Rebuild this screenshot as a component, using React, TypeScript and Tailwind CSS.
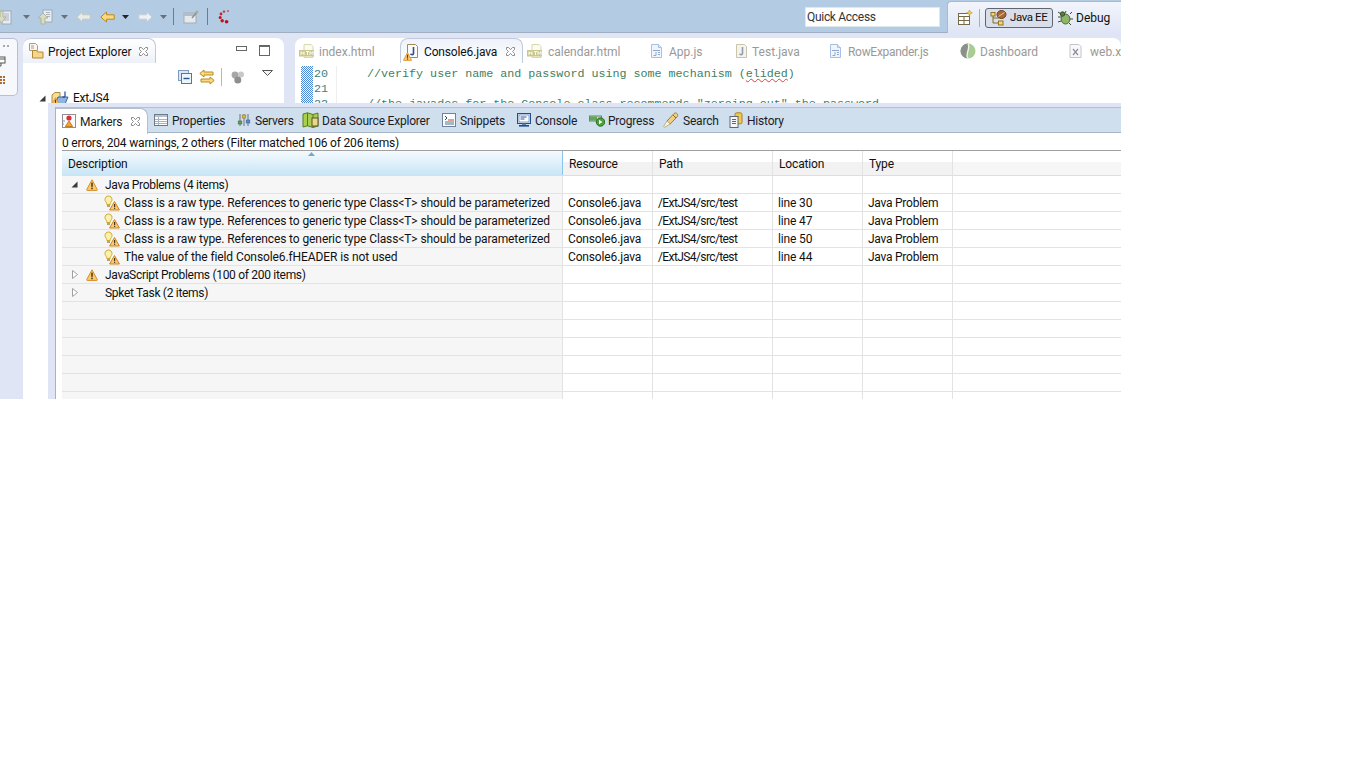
import React from 'react';

const font = "font-['Roboto',sans-serif]";

const Warn = ({ className = '' }: { className?: string }) => (
  <svg viewBox="0 0 12 12" className={className}>
    <path d="M6 .8 11.3 10.6c.2.4 0 .8-.5.8H1.2c-.5 0-.7-.4-.5-.8Z" fill="#f9cb70" stroke="#d88d2a" />
    <rect x="5.2" y="3.6" width="1.6" height="4.2" fill="#5a3c10" />
    <rect x="5.2" y="8.6" width="1.6" height="1.6" fill="#5a3c10" />
  </svg>
);

const BulbWarn = () => (
  <svg viewBox="0 0 16 16" className="w-4 h-4 shrink-0">
    <path d="M4.5 1C2.4 1 1 2.6 1 4.5 1 6 1.9 6.7 2.5 7.8c.3.6.3 1.1.3 1.7h3.4c0-.8 0-1.3.5-2C7.3 6.6 8 6 8 4.5 8 2.6 6.6 1 4.5 1Z" fill="#fdf0a8" stroke="#cfa83a" />
    <rect x="3" y="10" width="3" height="2" fill="#b9a46a" />
    <path d="M10.5 6.5 15.4 15H5.6Z" fill="#f9cb70" stroke="#c98420" />
    <rect x="10" y="9" width="1.2" height="3" fill="#4a3310" />
    <rect x="10" y="12.7" width="1.2" height="1.2" fill="#4a3310" />
  </svg>
);

const CloseX = () => (
  <svg viewBox="0 0 11 11" className="w-[11px] h-[11px] shrink-0">
    <path d="M1.5 1.5h2L5.5 3.7 7.5 1.5h2v2L7.5 5.5l2 2v2h-2L5.5 7.4 3.5 9.5h-2v-2l2-2-2-2Z" fill="#fff" stroke="#8c8c8c" />
  </svg>
);

const Dropdown = ({ dark = false }: { dark?: boolean }) => (
  <svg viewBox="0 0 7 4" className="w-[7px] h-[4px] shrink-0">
    <path d="M0 0h7L3.5 4Z" fill={dark ? '#20242c' : '#67707c'} />
  </svg>
);

const HtmlIcon = () => (
  <svg viewBox="0 0 16 16" className="w-4 h-4 shrink-0">
    <path d="M5 1.5h7l2 2v11H5Z" fill="#fbfbf2" stroke="#d8d8b0" />
    <rect x="0" y="7" width="15" height="6.5" fill="#c9c78e" />
    <path d="M2 8.5v3.5M5 8.5v3.5M2 10h3M7 8.5h3M8.5 8.5v3.5M11 12V8.5l1.5 2 1.5-2V12" stroke="#fff" fill="none" strokeWidth=".9" />
  </svg>
);

const JavaFile = ({ warn = false, dim = false }: { warn?: boolean; dim?: boolean }) => (
  <span className="relative w-4 h-4 shrink-0 block">
    <svg viewBox="0 0 16 16" className="w-4 h-4">
      <path d="M3.5 1.5h8l2 2v11h-10Z" fill={dim ? '#f6f4ea' : '#fdfcf4'} stroke={dim ? '#c9c4ac' : '#a08a55'} />
      <path d="M9.5 4v6.5c0 1.5-2.5 1.5-3 .2" fill="none" stroke={dim ? '#8d9cb8' : '#2a4f9c'} strokeWidth="1.6" />
    </svg>
    {warn && <Warn className="absolute -left-[1px] bottom-[-2px] w-[9px] h-[9px]" />}
  </span>
);

const JsFile = () => (
  <svg viewBox="0 0 16 16" className="w-4 h-4 shrink-0 ml-[-2px]">
    <path d="M2.5 1.5h7l3 3v10h-10Z" fill="#f0f5fc" stroke="#a9bfe6" />
    <path d="M9.5 1.5v3h3" fill="#dbe6f7" stroke="#a9bfe6" />
    <path d="M4 7.5h7M9 9.5h2M9 11.5h2M7 9v3.5H4.5" stroke="#8ea8d6" fill="none" />
  </svg>
);

const SpringIcon = () => (
  <svg viewBox="0 0 16 16" className="w-4 h-4 shrink-0">
    <circle cx="8" cy="8" r="7.5" fill="#a9cc92" />
    <path d="M8 .5A7.5 7.5 0 0 0 8 15.5C4.5 11 11 6 8 .5Z" fill="#8b9089" />
    <path d="M8 .5C11 6 4.5 11 8 15.5" stroke="#eef3ea" fill="none" strokeWidth="1.4" />
  </svg>
);

const XmlIcon = () => (
  <svg viewBox="0 0 16 16" className="w-4 h-4 shrink-0 ml-[-2px]">
    <path d="M2 1.5h9l2 2v11H2Z" fill="#f8f8fb" stroke="#c4c4cc" />
    <path d="M5 6l5 6M10 6l-5 6" stroke="#8a8f9c" strokeWidth="1.2" />
  </svg>
);

const BackArrow = ({ color, stroke }: { color: string; stroke: string }) => (
  <svg viewBox="0 0 15 12" className="w-[15px] h-3 shrink-0">
    <path d="M.8 6 6.5 1v2.8h7.7v4.4H6.5V11Z" fill={color} stroke={stroke} />
  </svg>
);

const FwdArrow = () => (
  <svg viewBox="0 0 15 12" className="w-[15px] h-3 shrink-0">
    <path d="M14.2 6 8.5 1v2.8H.8v4.4h7.7V11Z" fill="#eef1f4" stroke="#c3ccd6" />
  </svg>
);

const SaveDown = () => (
  <svg viewBox="0 0 16 18" className="w-4 h-[18px] shrink-0">
    <rect x="5" y="3" width="9" height="13" fill="#e8edf2" stroke="#9eabb8" />
    <path d="M7 6h5M7 8h5M7 10h5M7 12h5" stroke="#aab4c0" />
    <path d="M0 9h3V3h3v6h3l-4.500 6Z" fill="#d8dcc4" stroke="#b0b698" />
  </svg>
);

const SaveUp = () => (
  <svg viewBox="0 0 16 18" className="w-4 h-[18px] shrink-0">
    <rect x="5" y="2" width="9" height="12" fill="#e8edf2" stroke="#9eabb8" />
    <path d="M8 4.500h4M8 6.500h4M8 8.500h4" stroke="#aab4c0" />
    <path d="M0 10 5 5l5 5H7v6H3v-6Z" fill="#d8dcc4" stroke="#b0b698" />
  </svg>
);

const ToolOpen = () => (
  <svg viewBox="0 0 16 16" className="w-4 h-4 shrink-0">
    <rect x="1" y="4" width="12" height="10" fill="#e6e8ec" stroke="#a4adb8" />
    <rect x="1" y="4" width="12" height="3" fill="#b4bcc6" />
    <path d="M9 9l5-6" stroke="#8b9198" strokeWidth="1.4" />
    <circle cx="14" cy="3" r="1.4" fill="#a7b08e" />
  </svg>
);

const Spinner = () => (
  <svg viewBox="0 0 14 16" className="w-[14px] h-4 shrink-0">
    <circle cx="10" cy="2" r="1" fill="#c9535a" />
    <circle cx="6" cy="2.600" r="1.2" fill="#c9303a" />
    <circle cx="3" cy="5" r="1.4" fill="#c8202c" />
    <circle cx="2.200" cy="8.600" r="1.5" fill="#c8101c" />
    <circle cx="4.200" cy="11.800" r="1.7" fill="#c4101c" />
    <circle cx="8.600" cy="12.800" r="1.8" fill="#c00c18" />
  </svg>
);

const ExplorerIcon = () => (
  <svg viewBox="0 0 16 16" className="w-4 h-4 shrink-0">
    <path d="M1.500 .5h6l2 2v5h-8Z" fill="#f8f6ee" stroke="#a69f88" />
    <path d="M3 3h3M3 5h3" stroke="#b49a7a" />
    <path d="M4.500 9V7.500h4l1 1.500h5.500v6H4.500Z" fill="#f5d78a" stroke="#b08a38" />
  </svg>
);

const CollapseIcon = () => (
  <svg viewBox="0 0 14 14" className="w-[14px] h-[14px] shrink-0">
    <rect x=".5" y=".5" width="10" height="10" fill="#dbe7f4" stroke="#7e9cc0" />
    <rect x="3.500" y="3.500" width="10" height="10" fill="#eef4fb" stroke="#4e78a8" />
    <path d="M5.500 8.500h6" stroke="#27548c" strokeWidth="1.4" />
  </svg>
);

const LinkIcon = () => (
  <svg viewBox="0 0 16 16" className="w-4 h-4 shrink-0">
    <path d="M.8 4.500 5 1v2h9v3H5v2Z" fill="#fbd97c" stroke="#b78d22" />
    <path d="M15.200 11.500 11 15v-2H2v-3h9V8Z" fill="#fbd97c" stroke="#b78d22" />
  </svg>
);

const GreyBalls = () => (
  <svg viewBox="0 0 14 14" className="w-[14px] h-[14px] shrink-0">
    <circle cx="4" cy="5" r="3.400" fill="#a7a7a7" />
    <circle cx="10" cy="4.400" r="3" fill="#c8c8c8" />
    <circle cx="6.800" cy="10" r="3.500" fill="#8f8f8f" />
  </svg>
);

const ProjectIcon = () => (
  <span className="relative w-[18px] h-[14px] block shrink-0">
    <svg viewBox="0 0 18 14" className="w-[18px] h-[14px]">
      <path d="M1 4 4 1.500h5v11H1Z" fill="#f7dd98" stroke="#b08a38" />
      <path d="M4 13 7 6h10l-3 7Z" fill="#8fb6e0" stroke="#41689c" />
      <path d="M14 .5v4.500c0 1.500-2 1.500-2.400.6" stroke="#1c4a94" strokeWidth="1.2" fill="none" />
    </svg>
    <Warn className="absolute left-0 bottom-[-1px] w-[9px] h-[9px]" />
  </span>
);

const MarkersIcon = () => (
  <svg viewBox="0 0 16 16" className="w-4 h-4 shrink-0">
    <rect x="1.500" y="1.500" width="13" height="13" fill="#fbfbfd" stroke="#8f8f96" />
    <circle cx="8" cy="5" r="2.600" fill="#d8303c" />
    <path d="M8 8l3.600 5.500H4.400Z" fill="#f0a53c" stroke="#c37a18" />
    <path d="M2 8h2M2 11h1" stroke="#7f8fb5" />
  </svg>
);

const PropertiesIcon = () => (
  <svg viewBox="0 0 14 14" className="w-[14px] h-[14px] shrink-0">
    <rect x=".5" y="1.500" width="13" height="11" fill="#fff" stroke="#6c7a8c" />
    <rect x="1" y="2" width="12" height="2" fill="#b8c2ce" />
    <path d="M1 6.500h12M1 8.500h12M1 10.500h12M4.500 4v8" stroke="#aab4c0" />
  </svg>
);

const ServersIcon = () => (
  <svg viewBox="0 0 14 14" className="w-[14px] h-[14px] shrink-0">
    <path d="M3 1v12M7 1v12M11 1v12" stroke="#6a7280" />
    <rect x="1.200" y="8" width="3.600" height="3" fill="#64a050" stroke="#3e6c30" strokeWidth=".6" />
    <rect x="5.200" y="2" width="3.600" height="3" fill="#e8b82c" stroke="#9c7a16" strokeWidth=".6" />
    <rect x="9.200" y="7" width="3.600" height="3" fill="#5e8cc8" stroke="#355f96" strokeWidth=".6" />
  </svg>
);

const DataSourceIcon = () => (
  <svg viewBox="0 0 17 16" className="w-[17px] h-4 shrink-0">
    <path d="M1 2 5.500 .8 11 2.500 16 1v13l-5 1.500L5.500 13.800 1 15Z" fill="#a8cf4e" stroke="#5a7a20" />
    <path d="M5.500 1v13M11 2.500v13" stroke="#5a7a20" />
    <rect x="10" y="6" width="6" height="8" fill="#e9d88a" stroke="#5b5330" />
  </svg>
);

const SnippetsIcon = () => (
  <svg viewBox="0 0 14 16" className="w-[14px] h-4 shrink-0">
    <rect x=".5" y="1.500" width="13" height="13" fill="#fbfcfe" stroke="#71819a" />
    <path d="M3 4l2 2-2 2" stroke="#304a78" fill="none" />
    <path d="M6 8h6" stroke="#c9404a" />
    <path d="M3 10h9" stroke="#4a8c4a" />
    <path d="M3 12h9" stroke="#4a6cb0" />
  </svg>
);

const ConsoleIcon = () => (
  <svg viewBox="0 0 14 14" className="w-[14px] h-[14px] shrink-0">
    <rect x=".5" y=".5" width="13" height="10" fill="#dfe9f5" stroke="#1f4e8c" />
    <rect x="2" y="2" width="10" height="7" fill="#fff" stroke="#3b6aa8" strokeWidth=".6" />
    <path d="M3.500 4h6M3.500 6h4" stroke="#2d5a98" />
    <rect x="2" y="12" width="10" height="1.600" fill="#1f4e8c" />
    <rect x="5" y="10.500" width="4" height="1.500" fill="#5d7fae" />
  </svg>
);

const ProgressIcon = () => (
  <svg viewBox="0 0 16 14" className="w-4 h-[14px] shrink-0">
    <rect x=".5" y="3" width="12" height="5" fill="#cfd8d0" stroke="#6f7f78" />
    <rect x="1" y="3.500" width="7" height="4" fill="#5fa858" />
    <circle cx="11.500" cy="9" r="4.200" fill="#49a23a" stroke="#2c6e22" />
    <path d="M10 6.800v4.400l3.400-2.200Z" fill="#fff" />
  </svg>
);

const SearchIcon = () => (
  <svg viewBox="0 0 16 16" className="w-4 h-4 shrink-0">
    <path d="M4 9 11 1.500c1-.8 2.500-.6 3.200.3.7.9.7 2.200-.1 3L7.200 12Z" fill="#f0cf82" stroke="#a17c30" />
    <path d="M4 9l3.200 3-5.400 3.200c-.8.3-1.300-.3-1-1Z" fill="#fbf6dc" stroke="#b8b08c" />
    <path d="M10 3l3 3" stroke="#8f6a20" />
  </svg>
);

const HistoryIcon = () => (
  <svg viewBox="0 0 14 16" className="w-[14px] h-4 shrink-0">
    <rect x="6" y=".8" width="7" height="11" rx="1.500" fill="#f3c64c" stroke="#a88220" />
    <rect x="1" y="4.500" width="8" height="11" fill="#f4f6f9" stroke="#5c6878" />
    <path d="M3 7.500h4M3 9.500h4M3 11.500h4" stroke="#5c6878" />
  </svg>
);

const PerspectiveNew = () => (
  <svg viewBox="0 0 15 15" className="w-[15px] h-[15px] shrink-0">
    <rect x=".5" y="3.500" width="11" height="11" fill="#fdfdf8" stroke="#74694a" />
    <path d="M.5 6.500h11M6 6.500v8M.5 10.500h11" stroke="#74694a" />
    <path d="M11.500 0l.9 2 2 .9-2 .9-.9 2-.9-2-2-.9 2-.9Z" fill="#f4cf4e" stroke="#ae8d22" strokeWidth=".5" />
  </svg>
);

const JavaEEIcon = () => (
  <svg viewBox="0 0 17 16" className="w-[17px] h-4 shrink-0">
    <path d="M3 5v8h6M3 8h6" stroke="#7a6a2c" fill="none" />
    <rect x="1" y="2.500" width="4" height="3.500" fill="#f3d878" stroke="#8e7420" />
    <rect x="8.500" y="11" width="4.500" height="4" fill="#f3d878" stroke="#8e7420" />
    <ellipse cx="11.500" cy="4.500" rx="4.500" ry="4" fill="#a9683a" stroke="#6e3f1c" />
    <path d="M8.500 6.500l6-4" stroke="#e4c6a4" />
  </svg>
);

const DebugIcon = () => (
  <svg viewBox="0 0 16 16" className="w-4 h-4 shrink-0">
    <ellipse cx="8.500" cy="9" rx="4.400" ry="5" fill="#8fb56a" stroke="#4b6a30" />
    <circle cx="5.500" cy="4" r="2.200" fill="#5e7b40" stroke="#3a5024" />
    <path d="M1 2l3 2M1 7h3M1 12l3-1M13 4l2-2M13 9h3M12 13l2 2M9 1 8 3" stroke="#3e4a36" />
  </svg>
);

const TrimIcons = () => (
  <svg viewBox="0 0 10 50" className="w-[10px] h-[50px]">
    <path d="M3 1h2M7 1h2" stroke="#8a8f98" strokeWidth="1.400" />
    <rect x="-3" y="12" width="8" height="6" fill="#fff" stroke="#555" />
    <path d="M-3 14h8M1 18v3h-4" stroke="#555" fill="none" />
    <path d="M0 31h2v2H0ZM3 31h2v2H3ZM0 34h2v2H0ZM3 34h2v2H3ZM0 37h2v2H0ZM3 37h2v2H3Z" fill="#b06a2c" />
  </svg>
);

const ExpandedArrow = () => (
  <svg viewBox="0 0 7 7" className="w-[7px] h-[7px] shrink-0">
    <path d="M6.500.5v6h-6Z" fill="#3a3a3a" />
  </svg>
);

const CollapsedArrow = () => (
  <svg viewBox="0 0 6 9" className="w-[6px] h-[9px] shrink-0">
    <path d="M.5.5 5.500 4.500.5 8.500Z" fill="#fff" stroke="#a0a0a0" />
  </svg>
);

const editorTabs = [
  { label: 'calendar.html', icon: <HtmlIcon />, width: 'w-[124px]', gap: 'gap-[5px]', track: '', pad: 'pl-[4px]' },
  { label: 'App.js', icon: <JsFile />, width: 'w-[84px]', gap: 'gap-[4px]', track: '', pad: 'pl-[4px]' },
  { label: 'Test.java', icon: <JavaFile dim />, width: 'w-[95px]', gap: 'gap-[3px]', track: '', pad: 'pl-[2px]' },
  { label: 'RowExpander.js', icon: <JsFile />, width: 'w-[130px]', gap: 'gap-[4px]', track: 'tracking-[-0.3px]', pad: 'pl-[4px]' },
  { label: 'Dashboard', icon: <SpringIcon />, width: 'w-[110px]', gap: 'gap-[4px]', track: '', pad: 'pl-[4px]' },
  { label: 'web.xml', icon: <XmlIcon />, width: 'w-[100px]', gap: 'gap-[6px]', track: '', pad: 'pl-[4px]' },
];

const viewTabs = [
  { label: 'Properties', icon: <PropertiesIcon />, width: 'w-[83px]', gap: 'gap-[4px]' },
  { label: 'Servers', icon: <ServersIcon />, width: 'w-[65px]', gap: 'gap-[4px]' },
  { label: 'Data Source Explorer', icon: <DataSourceIcon />, width: 'w-[140px]', gap: 'gap-[3px]' },
  { label: 'Snippets', icon: <SnippetsIcon />, width: 'w-[75px]', gap: 'gap-[4px]' },
  { label: 'Console', icon: <ConsoleIcon />, width: 'w-[72px]', gap: 'gap-[4px]' },
  { label: 'Progress', icon: <ProgressIcon />, width: 'w-[74px]', gap: 'gap-[3px]' },
  { label: 'Search', icon: <SearchIcon />, width: 'w-[66px]', gap: 'gap-[4px]' },
  { label: 'History', icon: <HistoryIcon />, width: 'w-[70px]', gap: 'gap-[4px]' },
];

type Row = {
  kind: 'group' | 'item' | 'empty';
  text?: string;
  open?: boolean;
  warn?: boolean;
  line?: string;
};

const rows: Row[] = [
  { kind: 'group', text: 'Java Problems (4 items)', open: true, warn: true },
  { kind: 'item', text: 'Class is a raw type. References to generic type Class<T> should be parameterized', line: 'line 30' },
  { kind: 'item', text: 'Class is a raw type. References to generic type Class<T> should be parameterized', line: 'line 47' },
  { kind: 'item', text: 'Class is a raw type. References to generic type Class<T> should be parameterized', line: 'line 50' },
  { kind: 'item', text: 'The value of the field Console6.fHEADER is not used', line: 'line 44' },
  { kind: 'group', text: 'JavaScript Problems (100 of 200 items)', warn: true },
  { kind: 'group', text: 'Spket Task (2 items)' },
  { kind: 'empty' },
  { kind: 'empty' },
  { kind: 'empty' },
  { kind: 'empty' },
  { kind: 'empty' },
  { kind: 'empty' },
];

const cellBase = 'h-full border-r border-[#e3e3e3] flex items-center shrink-0';

const MarkerRow = ({ row }: { row: Row }) => (
  <div className="h-[18px] flex shrink-0 border-b border-[#e3e3e3] text-[12px] text-[#111]">
    <div className={`${cellBase} w-[501px] bg-[#f6f6f6]`}>
      {row.kind === 'group' && (
        <>
          <span className="w-[24px] flex justify-center pl-[1px] shrink-0">
            {row.open ? <ExpandedArrow /> : <CollapsedArrow />}
          </span>
          <span className="w-[19px] shrink-0 flex">{row.warn && <Warn className="w-3 h-3" />}</span>
          <span className="whitespace-nowrap tracking-[-0.3px]">{row.text}</span>
        </>
      )}
      {row.kind === 'item' && (
        <>
          <span className="w-[42px] shrink-0" />
          <BulbWarn />
          <span className="ml-[4px] whitespace-nowrap tracking-[-0.1px]">{row.text}</span>
        </>
      )}
    </div>
    <div className={`${cellBase} w-[90px] pl-[5px] tracking-[-0.15px]`}>{row.kind === 'item' && 'Console6.java'}</div>
    <div className={`${cellBase} w-[120px] pl-[5px] tracking-[-0.6px]`}>{row.kind === 'item' && '/ExtJS4/src/test'}</div>
    <div className={`${cellBase} w-[90px] pl-[5px] tracking-[-0.15px]`}>{row.line}</div>
    <div className={`${cellBase} w-[90px] pl-[5px] tracking-[-0.25px]`}>{row.kind === 'item' && 'Java Problem'}</div>
    <div className="flex-1" />
  </div>
);

const ColumnHead = ({ label, width }: { label: string; width: string }) => (
  <div className={`${width} h-full shrink-0 border-r border-[#e3e3e3] pl-[6px] pt-[2px] flex items-center tracking-[-0.15px] bg-linear-to-b from-[#ffffff] from-45% to-[#f2f2f2] to-45%`}>
    {label}
  </div>
);

const MarkersPanel = () => (
  <div className="absolute left-[48px] top-[103px] right-0 bottom-0 bg-[#dfe5f5] pt-[4px] pl-[7px] flex flex-col overflow-hidden">
    <div className="flex-1 flex flex-col bg-white border-l border-[#a9b1c2] min-h-0">
      <div className="h-[26px] shrink-0 bg-[#cfdfee] border-t border-[#b4bfd0] border-b border-b-[#a5b4c6] flex items-center text-[12px] text-[#1c1c28] tracking-[-0.2px]">
        <div className="w-[92px] h-[26px] mt-px shrink-0 bg-white rounded-tr-[8px] border-r border-t border-[#b4bfd0] flex items-center pl-[5px] gap-[3px]">
          <MarkersIcon />
          <span className="whitespace-nowrap pt-px">Markers</span>
          <span className="ml-[5px]"><CloseX /></span>
        </div>
        <div className="w-[6px] shrink-0" />
        {viewTabs.map((tab) => (
          <div key={tab.label} className={`${tab.width} ${tab.gap} shrink-0 flex items-center`}>
            {tab.icon}
            <span className="whitespace-nowrap pt-px">{tab.label}</span>
          </div>
        ))}
      </div>
      <div className="flex-1 flex flex-col pl-[6px] min-h-0">
        <div className="h-[17px] shrink-0 flex items-center pt-[2px] text-[12px] text-[#111] whitespace-nowrap tracking-[-0.18px]">
          0 errors, 204 warnings, 2 others (Filter matched 106 of 206 items)
        </div>
        <div className="h-[26px] shrink-0 border-t border-[#a0a0a0] border-b border-b-[#dedede] flex text-[12px] text-[#111]">
          <div className="relative w-[501px] h-full shrink-0 border-r border-[#8cc4ea] pl-[6px] pt-[2px] flex items-center tracking-[-0.1px] bg-linear-to-b from-[#f4fafd] to-[#c9e6f6]">
            Description
            <svg viewBox="0 0 7 4" className="absolute left-[246px] top-[1px] w-[7px] h-[4px]">
              <path d="M3.500 0 7 4H0Z" fill="#7aa8c8" />
            </svg>
          </div>
          <ColumnHead label="Resource" width="w-[90px]" />
          <ColumnHead label="Path" width="w-[120px]" />
          <ColumnHead label="Location" width="w-[90px]" />
          <ColumnHead label="Type" width="w-[90px]" />
          <div className="flex-1 bg-linear-to-b from-[#ffffff] from-45% to-[#f6f6f6] to-45%" />
        </div>
        {rows.map((row, i) => (
          <MarkerRow key={i} row={row} />
        ))}
      </div>
    </div>
  </div>
);

export default function App() {
  return (
    <div className={`w-[1366px] h-[768px] bg-white ${font}`}>
      <div className="relative w-[1121px] h-[399px] overflow-hidden bg-[#dfe5f5] flex flex-col">
        {/* main toolbar */}
        <div className="h-[33px] shrink-0 bg-[#b3cbe3] flex">
          <div className="w-[947px] shrink-0 h-full border-b border-[#a0aec2] flex items-center pt-px">
            <div className="flex items-center w-[805px] shrink-0 overflow-hidden">
              <span className="ml-[-3px]"><SaveDown /></span>
              <span className="ml-[10px]"><Dropdown /></span>
              <span className="ml-[8px]"><SaveUp /></span>
              <span className="ml-[7px]"><Dropdown /></span>
              <span className="ml-[8px]"><BackArrow color="#e8ebe6" stroke="#c0c8c8" /></span>
              <span className="ml-[9px]"><BackArrow color="#fbd982" stroke="#b98a1e" /></span>
              <span className="ml-[7px]"><Dropdown dark /></span>
              <span className="ml-[9px]"><FwdArrow /></span>
              <span className="ml-[7px]"><Dropdown /></span>
              <span className="ml-[6px] w-px h-[17px] bg-[#6d7c8c]" />
              <span className="ml-[9px]"><ToolOpen /></span>
              <span className="ml-[8px] w-px h-[17px] bg-[#6d7c8c]" />
              <span className="ml-[10px]"><Spinner /></span>
            </div>
            <input
              readOnly
              value="Quick Access"
              className="w-[135px] h-[20px] shrink-0 bg-white border border-[#dfe7ef] pl-[1px] pt-px text-[12px] tracking-[-0.3px] text-[#333] outline-none"
            />
          </div>
          <div className="flex-1 h-[32px] mt-px bg-linear-to-b from-[#f2f5fb] to-[#dfe5f5] rounded-tl-[4px] border-l border-t border-[#a9bad0] flex items-center text-[12px] text-[#111]">
            <span className="ml-[10px]"><PerspectiveNew /></span>
            <span className="ml-[6px] w-px h-[18px] bg-[#a8b0bc]" />
            <div className="ml-[5px] w-[68px] h-[20px] rounded-[3px] border border-[#5f6670] bg-[#d9dfea] flex items-center pl-[4px] gap-[3px] whitespace-nowrap text-[11.5px] tracking-[-0.4px]">
              <JavaEEIcon />
              <span className="pt-px">Java EE</span>
            </div>
            <span className="ml-[4px]"><DebugIcon /></span>
            <span className="ml-[3px] pt-px">Debug</span>
          </div>
        </div>

        <div className="h-[5px] shrink-0" />

        {/* workbench behind the fast view */}
        <div className="flex-1 flex min-h-0">
          <div className="w-[18px] h-[58px] shrink-0 bg-[#f6f8fc] border border-l-0 border-[#b6c0d2] rounded-r-[5px] pt-[6px] overflow-hidden">
            <TrimIcons />
          </div>
          <div className="ml-[5px] w-[261px] shrink-0 bg-white rounded-t-[8px] flex flex-col">
            <div className="flex h-[25px] shrink-0">
              <div className="w-[133px] rounded-tr-[8px] rounded-tl-[8px] border-t border-r border-[#c0cadc] bg-linear-to-b from-[#ffffff] to-[#eef1f8] flex items-center pl-[5px] gap-[4px] text-[12px] text-[#111] tracking-[-0.05px]">
                <ExplorerIcon />
                <span className="whitespace-nowrap pt-px">Project Explorer</span>
                <span className="ml-[2px]"><CloseX /></span>
              </div>
              <div className="flex-1 flex items-start pl-[80px] pt-[8px] gap-[12px]">
                <span className="w-[11px] h-[5px] border border-[#666] bg-white" />
                <span className="w-[11px] h-[11px] border border-[#666] border-t-2 bg-white mt-[-1px]" />
              </div>
            </div>
            <div className="h-[28px] flex items-center pl-[155px] shrink-0">
              <CollapseIcon />
              <span className="ml-[7px]"><LinkIcon /></span>
              <span className="ml-[6px] w-px h-[18px] bg-[#b8b8b8]" />
              <span className="ml-[9px]"><GreyBalls /></span>
              <svg viewBox="0 0 11 6" className="ml-[17px] mb-[8px] w-[11px] h-[6px]">
                <path d="M.5.5h10l-5 5Z" fill="#f4f4f4" stroke="#555" />
              </svg>
            </div>
            <div className="flex items-center pl-[16px] text-[12px] text-[#111] mt-[-2px]">
              <ExpandedArrow />
              <span className="ml-[5px]">
                <ProjectIcon />
              </span>
              <span className="ml-[4px] tracking-[-0.2px]">ExtJS4</span>
            </div>
          </div>
          <div className="ml-[11px] flex-1 min-w-0 bg-white rounded-t-[8px] flex flex-col overflow-hidden">
            <div className="flex h-[25px] shrink-0 text-[12px]">
              <div className="w-[105px] shrink-0 flex items-center pl-[4px] gap-[4px] text-[#999]">
                <HtmlIcon />
                <span className="whitespace-nowrap pt-[2px]">index.html</span>
              </div>
              <div className="w-[123px] shrink-0 rounded-t-[8px] border border-b-0 border-[#c0cadc] bg-linear-to-b from-[#eef2fa] to-[#ffffff] flex items-center pl-[3px] text-[#111]">
                <JavaFile warn />
                <span className="ml-[4px] whitespace-nowrap pt-px tracking-[-0.15px]">Console6.java</span>
                <span className="ml-[8px]"><CloseX /></span>
              </div>
              {editorTabs.map((tab) => (
                <div key={tab.label} className={`${tab.width} ${tab.gap} ${tab.track} ${tab.pad} shrink-0 flex items-center text-[#999]`}>
                  {tab.icon}
                  <span className="whitespace-nowrap pt-[2px]">{tab.label}</span>
                </div>
              ))}
            </div>
            <div className="flex pl-[6px] font-['Liberation_Mono',monospace] text-[11.7px] leading-[15px] pt-[3px]">
              <div className="w-[12px] h-[60px] shrink-0 bg-[repeating-conic-gradient(#4a86d8_0%_25%,#ffffff_0%_50%)] bg-[length:2px_2px]" />
              <div className="w-[24px] shrink-0 border-r border-[#eeeeee] pl-[1px] pt-px text-[#3d7f86]">
                <div>20</div>
                <div>21</div>
                <div>22</div>
              </div>
              <div className="pl-[30px] pt-px text-[#3f7f5f] whitespace-pre">
                <div>
                  //verify user name and password using some mechanism (
                  <span className="underline decoration-wavy decoration-[#e04040] decoration-1">elided</span>)
                </div>
                <div>&nbsp;</div>
                <div>//the javadoc for the Console class recommends "zeroing out" the password</div>
              </div>
            </div>
          </div>
        </div>

        <MarkersPanel />
      </div>
    </div>
  );
}
